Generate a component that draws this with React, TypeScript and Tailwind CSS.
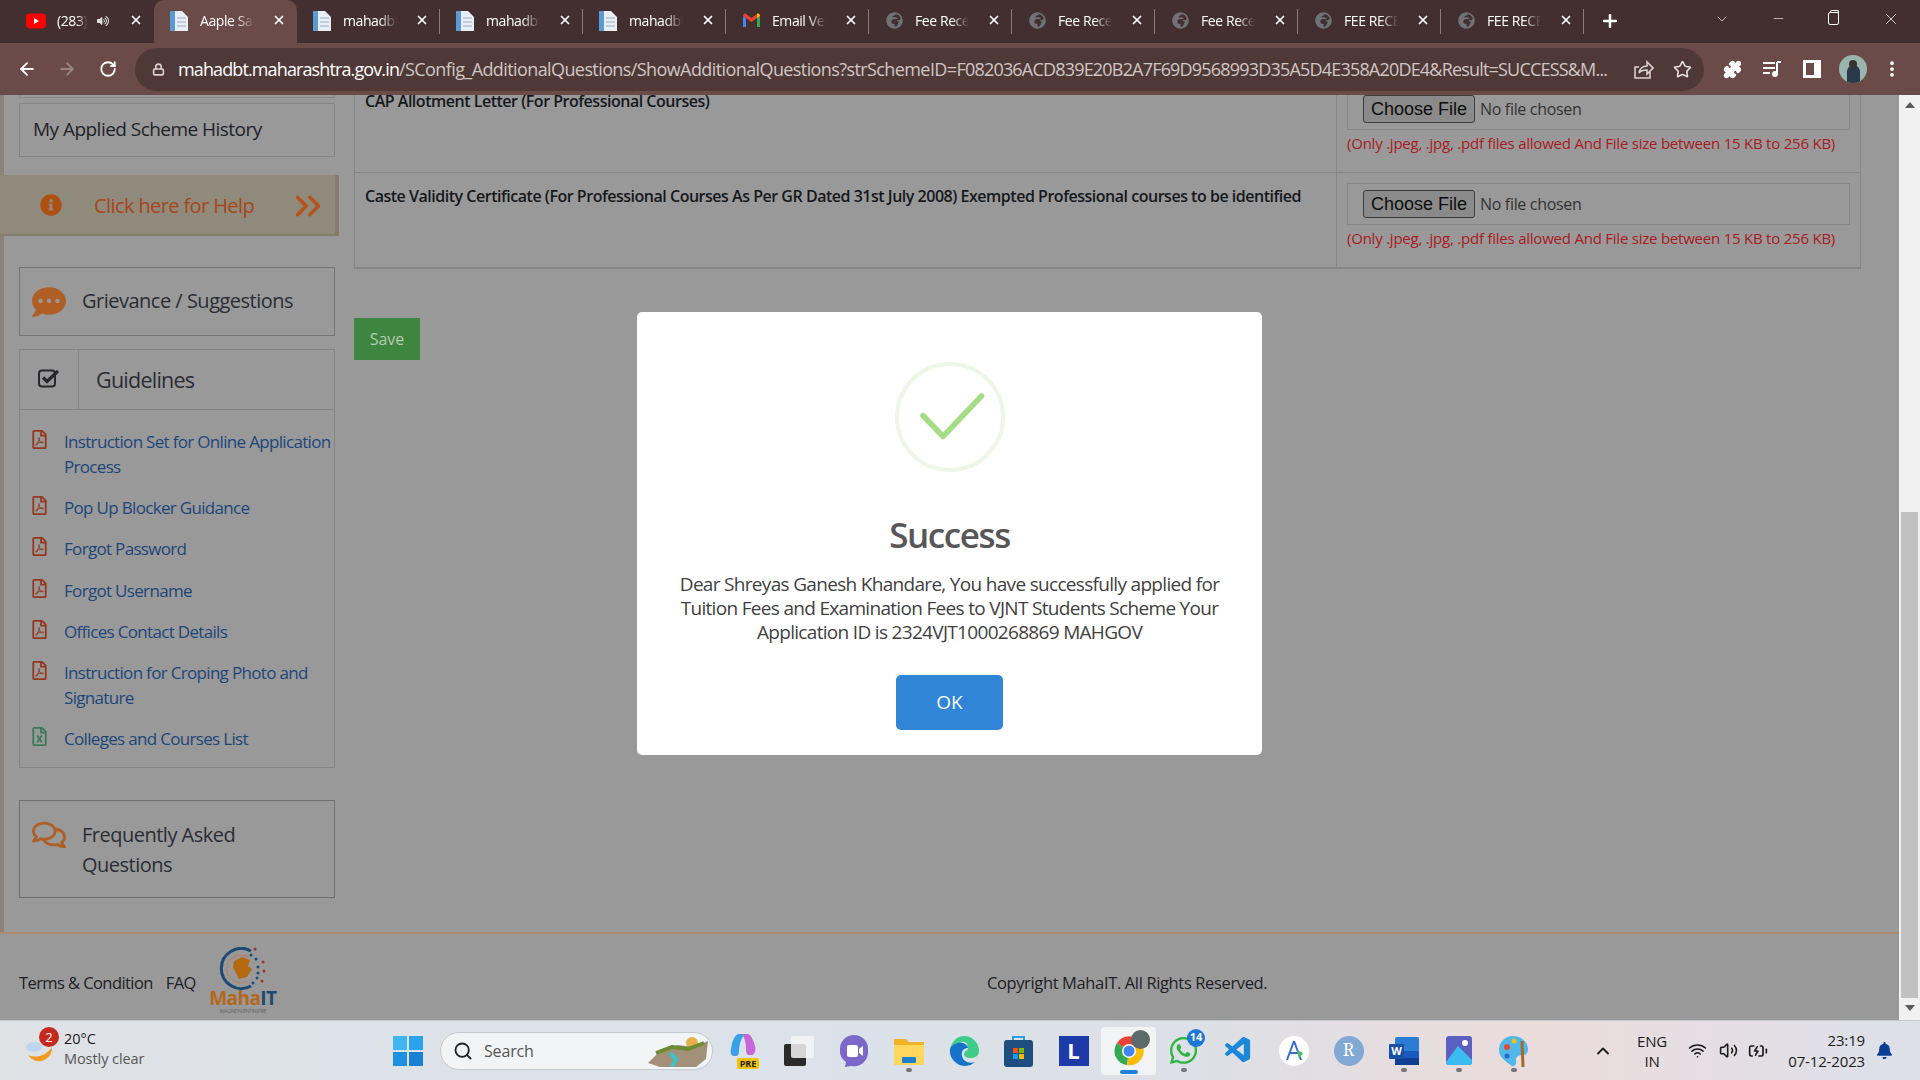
import { ArrowLeft, ArrowRight, BatteryCharging, ChevronDown, ChevronUp, ChevronsRight, EllipsisVertical, Lock, Minus, Plus, Puzzle, RotateCw, Search, Star, Volume2, Wifi, X } from 'lucide-react'
import { FaBell, FaCommentDots, FaGlobeAfrica, FaInfoCircle, FaRegComments, FaRegFileExcel, FaRegFilePdf, FaVolumeUp, FaWhatsapp } from 'react-icons/fa'
import { VscVscode } from 'react-icons/vsc'
import type { ReactNode } from 'react'

function YouTubeIcon() {
  return (
    <svg width="20" height="16" viewBox="0 0 20 16">
      <rect width="20" height="15" y="0.5" rx="4" fill="#f00" />
      <path d="M8 5l5 3-5 3z" fill="#fff" />
    </svg>
  )
}

function PageIcon() {
  return (
    <svg width="20" height="22" viewBox="0 0 20 22">
      <path d="M1 1h12l6 6v14H1z" fill="#e8eef4" />
      <rect x="1" y="1" width="5" height="20" fill="#5b9bd5" />
      <path d="M8 8h9M8 12h9M8 16h9" stroke="#b6c4d2" strokeWidth="1.5" />
    </svg>
  )
}

function GmailIcon() {
  return (
    <svg width="19" height="15" viewBox="0 0 19 15">
      <path d="M1 14V3l3 2v9z" fill="#4285f4" />
      <path d="M15 14V5l3-2v11z" fill="#34a853" />
      <path d="M1 3c0-2 2-3 3-2l5.5 4L15 1c1-1 3 0 3 2l-3 2-5.5 4L4 5z" fill="#ea4335" />
      <path d="M15 1c1-1 3 0 3 2l-3 2z" fill="#fbbc04" />
    </svg>
  )
}

const tabs: { title: string; icon: ReactNode; active?: boolean; sound?: boolean; noSep?: boolean }[] = [
  { title: '(283)', icon: <YouTubeIcon />, sound: true, noSep: true },
  { title: 'Aaple Sarkar', icon: <PageIcon />, active: true, noSep: true },
  { title: 'mahadbt', icon: <PageIcon /> },
  { title: 'mahadbt', icon: <PageIcon /> },
  { title: 'mahadbt', icon: <PageIcon /> },
  { title: 'Email Verif', icon: <GmailIcon /> },
  { title: 'Fee Receipt', icon: <FaGlobeAfrica size={17} className="text-[#6f7378]" /> },
  { title: 'Fee Receipt', icon: <FaGlobeAfrica size={17} className="text-[#6f7378]" /> },
  { title: 'Fee Receipt', icon: <FaGlobeAfrica size={17} className="text-[#6f7378]" /> },
  { title: 'FEE RECEIPT', icon: <FaGlobeAfrica size={17} className="text-[#6f7378]" /> },
  { title: 'FEE RECEIPT', icon: <FaGlobeAfrica size={17} className="text-[#6f7378]" /> },
]

function TabStrip() {
  return (
    <div className="flex h-[43px] items-stretch bg-[#432f2f] pl-[11px] text-white">
      {tabs.map((t, i) => (
        <div
          key={i}
          className={`relative flex w-[143px] shrink-0 items-center pb-[2px] pl-[15px] ${t.active ? 'rounded-t-[10px] bg-[#6a4b47]' : ''}`}
        >
          <div className="flex w-[20px] shrink-0 justify-center">{t.icon}</div>
          <div className={`ml-[11px] overflow-hidden whitespace-nowrap text-[14px] tracking-[-0.03em] [mask-image:linear-gradient(to_right,black_60%,transparent_90%)] ${t.sound ? 'w-[34px]' : 'w-[60px]'}`}>
            {t.title}
          </div>
          {t.sound && <FaVolumeUp size={12} className="ml-[6px] text-[#ddd]" />}
          <X size={14} strokeWidth={3} className="absolute left-[118px] top-[13px]" />
          {!t.noSep && <div className="absolute right-0 top-[9px] h-[25px] w-px bg-[#8a7a78]" />}
        </div>
      ))}
      <div className="ml-[16px] flex items-center pb-[2px]">
        <Plus size={20} strokeWidth={3} />
      </div>
      <div className="ml-auto flex items-center">
        <ChevronDown size={16} strokeWidth={1} className="mr-[41px] mb-[6px]" />
        <Minus size={15} strokeWidth={1} className="mr-[42px] mb-[6px]" />
        <div className="relative mr-[43px] mb-[6px] h-[13px] w-[11px] rounded-[2px] border border-white">
          <div className="absolute -top-[3px] left-[1px] h-[3px] w-[9px] rounded-t-[2px] border-x border-t border-white" />
        </div>
        <X size={18} strokeWidth={1} className="mr-[20px] mb-[6px]" />
      </div>
    </div>
  )
}

function ShareIcon() {
  return (
    <svg width="21" height="21" viewBox="0 0 21 21" fill="none" stroke="#d8d2d0" strokeWidth="1.6" className="ml-[23px] shrink-0">
      <path d="M17 13v6H2V8h4" />
      <path d="M6 14c1-5 4-7 8-7V3l6 6-6 6v-4c-3 0-6 0-8 3z" />
    </svg>
  )
}

function Toolbar() {
  return (
    <div className="flex h-[52px] items-center bg-[#6a4b47] text-white">
      <div className="flex w-[135px] shrink-0 items-center pl-[17px]">
        <ArrowLeft size={20} strokeWidth={2.2} />
        <ArrowRight size={20} strokeWidth={2.2} className="ml-[20px] text-[#968682]" />
        <RotateCw size={18} strokeWidth={2.4} className="ml-[22px]" />
      </div>
      <div className="flex h-[43px] w-[1569px] shrink-0 items-center rounded-full bg-[#4f3937] pl-[17px]">
        <Lock size={13} strokeWidth={3} className="shrink-0 text-[#d8d2d0]" />
        <div className="ml-[13px] w-[1432px] overflow-hidden whitespace-nowrap text-[18px] tracking-[-0.033em] text-[#cfc6c4]">
          <span className="tracking-[-0.049em] text-white">mahadbt.maharashtra.gov.in</span>
          /SConfig_AdditionalQuestions/ShowAdditionalQuestions?strSchemeID=
          <span className="tracking-[-0.045em]">F082036ACD839E20B2A7F69D9568993D35A5D4E358A20DE4&amp;Result=SUCCESS&amp;M...</span>
        </div>
        <ShareIcon />
        <Star size={19} className="ml-[19px] shrink-0 text-[#e6e0de]" />
      </div>
      <Puzzle size={19} fill="white" className="ml-[19px] shrink-0" />
      <svg width="20" height="18" viewBox="0 0 20 18" className="ml-[20px] shrink-0" fill="none" stroke="white" strokeWidth="2">
        <path d="M1 3h12M1 8h12M1 13h7M15 2h4M15 2v12" />
        <circle cx="13" cy="14" r="2" fill="white" />
      </svg>
      <div className="ml-[21px] h-[18px] w-[18px] shrink-0 border-[3px] border-r-[7px] border-white" />
      <div className="relative ml-[18px] h-[28px] w-[28px] shrink-0 overflow-hidden rounded-full bg-[#9ab5ad]">
        <div className="absolute bottom-0 left-[8px] h-[18px] w-[13px] rounded-t-full bg-[#27394a]" />
        <div className="absolute left-[10px] top-[5px] h-[8px] w-[8px] rounded-full bg-[#3a3230]" />
      </div>
      <EllipsisVertical size={20} strokeWidth={2.5} className="ml-[15px] shrink-0" />
    </div>
  )
}

const guideLinks: { label: string; xls?: boolean }[] = [
  { label: 'Instruction Set for Online Application Process' },
  { label: 'Pop Up Blocker Guidance' },
  { label: 'Forgot Password' },
  { label: 'Forgot Username' },
  { label: 'Offices Contact Details' },
  { label: 'Instruction for Croping Photo and Signature' },
  { label: 'Colleges and Courses List', xls: true },
]

function CheckBoxIcon() {
  return (
    <svg width="22" height="21" viewBox="0 0 22 21" fill="none">
      <rect x="1" y="2.5" width="16" height="16" rx="3" stroke="#26282c" strokeWidth="2" />
      <path d="M5 9.5l4 4L20 3" stroke="#26282c" strokeWidth="3.2" />
    </svg>
  )
}

function Sidebar() {
  return (
    <aside className="w-[354px] shrink-0 border-l-[4px] border-[#8d817a] text-[#1f2328]">
      <div className="ml-[15px] h-[3px] w-[316px] border-x border-b border-[#858585]" />
      <div className="ml-[15px] mt-[5px] flex h-[54px] w-[316px] items-center border border-[#858585] pb-[2px] pl-[13px] text-[19px] tracking-[-0.028em]">
        My Applied Scheme History
      </div>
      <div className="-ml-[4px] mt-[18px] flex h-[61px] w-[339px] items-center border-b-[2px] border-r-[4px] border-[#857c70] bg-[#8f8a7c] text-[#a8461a]">
        <FaInfoCircle size={22} className="ml-[40px] text-[#ae4f13]" />
        <span className="ml-[32px] mt-[2px] w-[160px] whitespace-nowrap text-[20px] tracking-[-0.03em]">Click here for Help</span>
        <ChevronsRight size={42} strokeWidth={2} className="ml-[33px] mt-[3px] shrink-0 text-[#b5531a]" />
      </div>
      <div className="ml-[15px] mt-[31px] flex h-[69px] w-[316px] items-center border border-[#757575] pl-[12px] text-[#2a2d33]">
        <FaCommentDots size={34} className="text-[#af5f25]" />
        <span className="ml-[16px] pb-[2px] text-[20px] tracking-[-0.025em]">Grievance / Suggestions</span>
      </div>
      <div className="ml-[15px] mt-[13px] h-[419px] w-[316px] border border-[#858585]">
        <div className="flex h-[60px] border-b border-[#858585]">
          <div className="flex w-[59px] justify-center border-r border-[#858585] pt-[18px]">
            <CheckBoxIcon />
          </div>
          <div className="ml-[17px] flex items-center pt-[1px] text-[21.5px] tracking-[-0.035em] text-[#2a2d33]">Guidelines</div>
        </div>
        <ul className="pt-[19px]">
          {guideLinks.map((l) => (
            <li key={l.label} className="mb-[16.2px] flex pl-[11px] text-[17px] leading-[25px] tracking-[-0.04em] text-[#1d4679]">
              <div className="flex w-[16px] shrink-0 justify-center pt-[1px]">
                {l.xls ? (
                  <FaRegFileExcel size={19} className="shrink-0 text-[#3c7a5c]" />
                ) : (
                  <FaRegFilePdf size={19} className="shrink-0 text-[#95371f]" />
                )}
              </div>
              <span className="ml-[17px] w-[270px] shrink-0">{l.label}</span>
            </li>
          ))}
        </ul>
      </div>
      <div className="ml-[15px] mt-[32px] flex h-[98px] w-[316px] border border-[#6f6f6f] pl-[12px] pt-[19px] text-[#2a2d33]">
        <FaRegComments size={34} className="mt-[-2px] shrink-0 text-[#af5f25]" />
        <span className="ml-[16px] w-[220px] text-[20px] leading-[30px] tracking-[-0.025em]">Frequently Asked Questions</span>
      </div>
    </aside>
  )
}

function UploadRow({ label, height }: { label: string; height: string }) {
  return (
    <div className={`flex border-b border-[#868686] ${height}`}>
      <div className="w-[982px] shrink-0 border-r border-[#868686] pl-[10px] pt-[12px] text-[16px] font-semibold leading-[22px] tracking-[-0.03em] text-[#16181c]">
        {label}
      </div>
      <div className="flex-1 pl-[10px] pt-[10px]">
        <div className="flex h-[42px] w-[503px] items-center border border-[#868686] pl-[15px]">
          <div className="flex h-[28px] w-[112px] items-center justify-center rounded-[3px] border border-[#3c3c3c] bg-[#8a8a8a] font-['Liberation_Sans',sans-serif] text-[18px] text-[#0d0d0d]">
            Choose File
          </div>
          <span className="ml-[5px] text-[16px] tracking-[-0.02em] text-[#333]">No file chosen</span>
        </div>
        <div className="mt-[2px] whitespace-nowrap text-[15px] leading-[22px] tracking-[-0.015em] text-[#a91a22]">
          (Only .jpeg, .jpg, .pdf files allowed And File size between 15 KB to 256 KB)
        </div>
      </div>
    </div>
  )
}

function MainContent() {
  return (
    <div className="flex-1">
      <div className="-mt-[17px] w-[1507px] border border-t-0 border-[#868686]">
        <UploadRow label="CAP Allotment Letter (For Professional Courses)" height="h-[95px]" />
        <UploadRow label="Caste Validity Certificate (For Professional Courses As Per GR Dated 31st July 2008) Exempted Professional courses to be identified" height="h-[95px]" />
      </div>
      <div className="mt-[49px] flex h-[42px] w-[66px] items-center justify-center bg-[#3e8640] text-[16px] text-[#b4ccb0]">Save</div>
    </div>
  )
}

function MahaLogo() {
  return (
    <div className="flex w-[72px] flex-col items-center">
      <svg width="50" height="44" viewBox="0 0 50 44" fill="none">
        <path d="M33 4A20 20 0 1 0 33 39" stroke="#1c4a73" strokeWidth="3" />
        <path d="M30 10A14 14 0 1 0 30 34" stroke="#c07a5a" strokeWidth="1" />
        <path d="M16 14l8-4 8 3-2 6 4 3-5 8-8 2-3-6-3-5z" fill="#b4680f" />
        {[[37, 2, '#a83030'], [33, 8, '#1c4a73'], [38, 12, '#1c4a73'], [45, 15, '#a83030'], [40, 20, '#1c4a73'], [46, 24, '#a83030'], [40, 26, '#1c4a73'], [39, 31, '#1c4a73'], [44, 34, '#a83030'], [35, 36, '#1c4a73']].map(([x, y, c], i) => (
          <circle key={i} cx={x as number} cy={y as number} r="1.5" fill={c as string} />
        ))}
      </svg>
      <div className="-mt-[3px] text-[19px] font-bold leading-[20px] text-[#b4681c]">
        Maha<span className="text-[#1c4a73]">IT</span>
      </div>
      <div className="whitespace-nowrap text-[5px] leading-[6px] text-[#6a6a6a]">IMAGINE INVENT INSPIRE</div>
    </div>
  )
}

function Footer() {
  return (
    <footer className="flex h-[88px] items-center border-t-[2px] border-[#b08a6a] pl-[19px] pt-[12px] text-[16.5px] tracking-[-0.035em] text-[#1d2126]">
      <span>Terms &amp; Condition</span>
      <span className="ml-[13px]">FAQ</span>
      <div className="ml-[11px] pb-[5px]">
        <MahaLogo />
      </div>
      <span className="ml-[708px] tracking-[-0.022em]">Copyright MahaIT. All Rights Reserved.</span>
    </footer>
  )
}

function Scrollbar() {
  return (
    <div className="flex w-[21px] shrink-0 flex-col items-center bg-[#f1f1f1]">
      <div className="mt-[7px] h-0 w-0 border-x-[5px] border-b-[6px] border-x-transparent border-b-[#5a5a5a]" />
      <div className="mt-[404px] h-[486px] w-[17px] bg-[#c1c1c1]" />
      <div className="mt-[7px] h-0 w-0 border-x-[5px] border-t-[6px] border-x-transparent border-t-[#5a5a5a]" />
    </div>
  )
}

function SuccessModal() {
  return (
    <div className="absolute inset-y-0 left-0 flex w-[1899px] justify-center pt-[217px]">
      <div className="flex h-[443px] w-[625px] flex-col items-center rounded-[5px] bg-white">
        <div className="mt-[50px] flex h-[110px] w-[110px] items-center justify-center rounded-full border-[4px] border-[#ecf7e6]">
          <svg width="70" height="50" viewBox="0 0 70 50" fill="none" className="mt-[2px]">
            <path d="M8 22.5L28 43.5L66.5 3" stroke="#a5dc86" strokeWidth="5.5" strokeLinecap="round" strokeLinejoin="round" />
          </svg>
        </div>
        <h2 className="mt-[39px] text-[35px] font-semibold leading-[48px] tracking-[-0.04em] text-[#575757]">Success</h2>
        <p className="mt-[13px] w-[570px] text-center text-[19px] leading-[24px] tracking-[-0.036em] text-[#3f3f3f]">
          Dear Shreyas Ganesh Khandare, You have successfully applied for Tuition Fees and Examination Fees to VJNT Students Scheme Your Application ID is 2324VJT1000268869 MAHGOV
        </p>
        <button className="mt-[31px] h-[55px] w-[107px] rounded-[5px] bg-[#3085d6] text-[19px] text-white">OK</button>
      </div>
    </div>
  )
}

function Dot() {
  return <div className="absolute bottom-[3px] left-1/2 h-[4px] w-[6px] -translate-x-1/2 rounded-full bg-[#777]" />
}

function TaskIcon({ children, running, active }: { children: ReactNode; running?: boolean; active?: boolean }) {
  return (
    <div className={`relative flex h-[48px] w-[55px] shrink-0 items-center justify-center rounded-[4px] ${active ? 'bg-[#f2f3f5]' : ''}`}>
      {children}
      {running && <Dot />}
      {active && <div className="absolute bottom-[1px] left-1/2 h-[4px] w-[18px] -translate-x-1/2 rounded-full bg-[#1f80d8]" />}
    </div>
  )
}

function StartIcon() {
  return (
    <svg width="30" height="30" viewBox="0 0 30 30">
      <rect width="14" height="14" fill="#3fb6f2" />
      <rect x="16" width="14" height="14" fill="#2aa3ea" />
      <rect y="16" width="14" height="14" fill="#1e90e0" />
      <rect x="16" y="16" width="14" height="14" fill="#1a80d4" />
    </svg>
  )
}

function Taskbar() {
  return (
    <div className="flex h-[60px] shrink-0 items-center border-t border-[#c4c7cb] bg-[linear-gradient(to_right,#dfe2e5_0%,#dbe2ea_40%,#dde0e6_62%,#ebdcdc_80%,#dde0ea_100%)] text-[#1c1c1c]">
      <div className="relative flex w-[393px] shrink-0 items-center pl-[25px]">
        <svg width="30" height="32" viewBox="0 0 30 32">
          <path d="M27 12A13 13 0 0 1 3 20C12 24 22 20 27 12z" fill="#f29a1f" />
          <ellipse cx="9" cy="12" rx="8" ry="5" fill="#bcd6ee" />
        </svg>
        <div className="absolute left-[39px] top-[-2px] flex h-[20px] w-[20px] items-center justify-center rounded-full bg-[#c4291f] text-[13px] leading-none text-white">2</div>
        <div className="ml-[9px] pb-[3px] text-[14.5px] leading-[20px]">
          <div>20°C</div>
          <div className="tracking-[-0.005em] text-[#555]">Mostly clear</div>
        </div>
      </div>
      <StartIcon />
      <div className="ml-[17px] flex h-[38px] w-[273px] shrink-0 items-center rounded-full border border-[#c6cace] bg-[#f2f4f6] pl-[12px]">
        <Search size={20} strokeWidth={2.2} className="text-[#222]" />
        <span className="ml-[11px] text-[16px] tracking-[-0.01em] text-[#555]">Search</span>
        <svg width="62" height="32" viewBox="0 0 62 32" className="ml-auto mr-[2px]">
          <circle cx="44" cy="8" r="6" fill="#e8b04c" />
          <path d="M0 28L14 14L30 10L46 12L60 6L58 24L48 32H12z" fill="#a39078" />
          <path d="M8 18L24 12L40 14L56 8" stroke="#6d8b33" strokeWidth="4" fill="none" />
          <path d="M22 18L28 24L24 32" stroke="#3bc4c8" strokeWidth="4" fill="none" />
        </svg>
      </div>
      <div className="ml-[3px] flex items-center">
        <TaskIcon>
          <svg width="30" height="36" viewBox="0 0 30 36">
            <path d="M9 1h7c-3 3-6 10-6 17 0 3-1 5-3 5H5C2 23 1 20 2 16 3 9 5 3 9 1z" fill="#3aa0e8" />
            <path d="M13 1h6c3 1 5 5 7 12 1 4 0 8-3 9h-3c-2 0-3-2-3-5 0-6-1-12-4-16z" fill="#c868d8" />
            <rect x="8" y="25" width="22" height="11" rx="2" fill="#f2c200" />
            <text x="19" y="33.5" textAnchor="middle" fontSize="9" fontWeight="700" fill="#222">PRE</text>
          </svg>
        </TaskIcon>
        <TaskIcon>
          <svg width="30" height="30" viewBox="0 0 30 30">
            <rect y="8" width="22" height="22" rx="2" fill="#2a2a2a" />
            <rect x="7" width="23" height="22" rx="2" fill="#f4f4f4" opacity="0.85" />
          </svg>
        </TaskIcon>
        <TaskIcon>
          <svg width="30" height="34" viewBox="0 0 30 34">
            <path d="M15 1a14 14 0 0 1 14 14v4a14 14 0 0 1-17 13l-6 1 1-5A14 14 0 0 1 1 19v-4A14 14 0 0 1 15 1z" fill="#7b68c8" />
            <rect x="8" y="11" width="11" height="12" rx="2" fill="#fff" />
            <path d="M20 15l4-3v10l-4-3z" fill="#fff" />
          </svg>
        </TaskIcon>
        <TaskIcon running>
          <svg width="30" height="28" viewBox="0 0 30 28">
            <path d="M0 2h12l3 3h15v23H0z" fill="#f0b429" />
            <rect y="8" width="30" height="20" fill="#ffd75e" />
            <rect x="8" y="20" width="14" height="6" rx="1" fill="#1c7fd0" />
          </svg>
        </TaskIcon>
        <TaskIcon>
          <svg width="30" height="30" viewBox="0 0 30 30">
            <path d="M15 0a15 15 0 0 1 15 15c0 4-3 7-8 7-5 0-7-2-7-4 0-3 4-3 4-6S17 5 13 6 1 13 1 13 4 0 15 0z" fill="#3dcc8a" />
            <path d="M1 13c2-5 8-7 13-6 3 1 5 3 5 5-4 0-7 3-6 8s6 8 13 6A15 15 0 0 1 1 13z" fill="#1573c9" />
          </svg>
        </TaskIcon>
        <TaskIcon>
          <svg width="29" height="32" viewBox="0 0 29 32">
            <path d="M9 5V2h11v3" stroke="#2aa2e0" strokeWidth="2" fill="none" />
            <rect y="5" width="29" height="27" rx="3" fill="#1e4e80" />
            <rect x="9" y="13" width="5" height="5" fill="#f25022" />
            <rect x="15" y="13" width="5" height="5" fill="#7fba00" />
            <rect x="9" y="19" width="5" height="5" fill="#00a4ef" />
            <rect x="15" y="19" width="5" height="5" fill="#ffb900" />
          </svg>
        </TaskIcon>
        <TaskIcon>
          <div className="flex h-[30px] w-[30px] items-center justify-center bg-[#1c3aa8] text-[22px] font-bold text-white">L</div>
        </TaskIcon>
        <TaskIcon active>
          <svg width="32" height="32" viewBox="0 0 32 32">
            <path d="M16 16L4 8a14 14 0 0 1 24 0z" fill="#ea4335" />
            <path d="M16 16L4 8a14 14 0 0 0 10 22z" fill="#34a853" />
            <path d="M16 16L14 30A14 14 0 0 0 28 8z" fill="#fbbc04" />
            <circle cx="16" cy="16" r="7" fill="#fff" />
            <circle cx="16" cy="16" r="5.5" fill="#4285f4" />
          </svg>
          <div className="absolute right-[6px] top-[3px] h-[19px] w-[19px] rounded-full bg-[#5d6a6c]" />
        </TaskIcon>
        <TaskIcon running>
          <FaWhatsapp size={31} className="text-[#2ab53f]" />
          <div className="absolute right-[6px] top-[2px] flex h-[18px] w-[18px] items-center justify-center rounded-full bg-[#1a78d6] text-[11px] font-bold text-white">14</div>
        </TaskIcon>
        <TaskIcon>
          <VscVscode size={31} className="text-[#1a88d8]" />
        </TaskIcon>
        <TaskIcon>
          <div className="flex h-[30px] w-[30px] items-center justify-center rounded-full bg-white">
            <svg width="20" height="22" viewBox="0 0 20 22" fill="none" stroke="#3a6ad0" strokeWidth="2">
              <path d="M10 1L3 20M10 1l7 19M5 13h10" />
              <path d="M13 10l6 3-4 6z" fill="#4cb86a" stroke="none" />
            </svg>
          </div>
        </TaskIcon>
        <TaskIcon>
          <div className="flex h-[30px] w-[30px] items-center justify-center rounded-full bg-[#82a8d4] font-serif text-[19px] text-white">R</div>
        </TaskIcon>
        <TaskIcon running>
          <svg width="30" height="28" viewBox="0 0 30 28">
            <rect x="6" width="24" height="28" rx="2" fill="#2b7cd3" />
            <rect x="6" y="14" width="24" height="7" fill="#185abd" />
            <rect x="6" y="21" width="24" height="7" fill="#103f91" />
            <rect y="7" width="15" height="15" rx="1" fill="#1a4fa8" />
            <text x="7.5" y="18" textAnchor="middle" fontSize="11" fontWeight="700" fill="#fff">W</text>
          </svg>
        </TaskIcon>
        <TaskIcon running>
          <svg width="26" height="29" viewBox="0 0 26 29">
            <rect width="26" height="29" rx="3" fill="#5a5fc0" />
            <path d="M0 26L12 10L26 24V26a3 3 0 0 1-3 3H3a3 3 0 0 1-3-3z" fill="#3bbcf0" />
            <circle cx="19" cy="7" r="3" fill="#fff" />
          </svg>
        </TaskIcon>
        <TaskIcon running>
          <svg width="30" height="32" viewBox="0 0 30 32">
            <path d="M14 1C5 1 0 8 0 15c0 8 8 12 13 16 3 1 5-3 4-6s3-5 7-5 5-3 5-6C29 7 22 1 14 1z" fill="#4fb8e8" />
            <circle cx="8" cy="12" r="3" fill="#e04a3a" />
            <circle cx="15" cy="6" r="2.5" fill="#f2c21a" />
            <circle cx="8" cy="21" r="2.5" fill="#2a6ad0" />
            <path d="M23 6l1 26" stroke="#a8682a" strokeWidth="3" />
          </svg>
        </TaskIcon>
      </div>
      <ChevronUp size={20} strokeWidth={2.2} className="ml-[52px] shrink-0" />
      <div className="ml-[17px] w-[44px] shrink-0 text-center text-[15px] leading-[20px] tracking-[-0.01em]">
        <div>ENG</div>
        <div>IN</div>
      </div>
      <Wifi size={19} className="ml-[14px] shrink-0" />
      <Volume2 size={19} className="ml-[12px] shrink-0" />
      <BatteryCharging size={20} className="ml-[10px] shrink-0" />
      <div className="ml-[18px] w-[79px] shrink-0 text-right text-[15px] leading-[21px] tracking-[-0.01em]">
        <div>23:19</div>
        <div className="whitespace-nowrap">07-12-2023</div>
      </div>
      <FaBell size={17} className="ml-[11px] shrink-0 text-[#0b3f94]" />
    </div>
  )
}

export default function App() {
  return (
    <div className="flex h-screen w-screen flex-col overflow-hidden bg-[#999] font-['Open_Sans',sans-serif]">
      <TabStrip />
      <Toolbar />
      <div className="relative flex min-h-0 flex-1">
        <div className="flex w-[1899px] shrink-0 flex-col overflow-hidden">
          <div className="flex min-h-0 flex-1">
            <Sidebar />
            <MainContent />
          </div>
          <Footer />
        </div>
        <Scrollbar />
        <SuccessModal />
      </div>
      <Taskbar />
    </div>
  )
}
